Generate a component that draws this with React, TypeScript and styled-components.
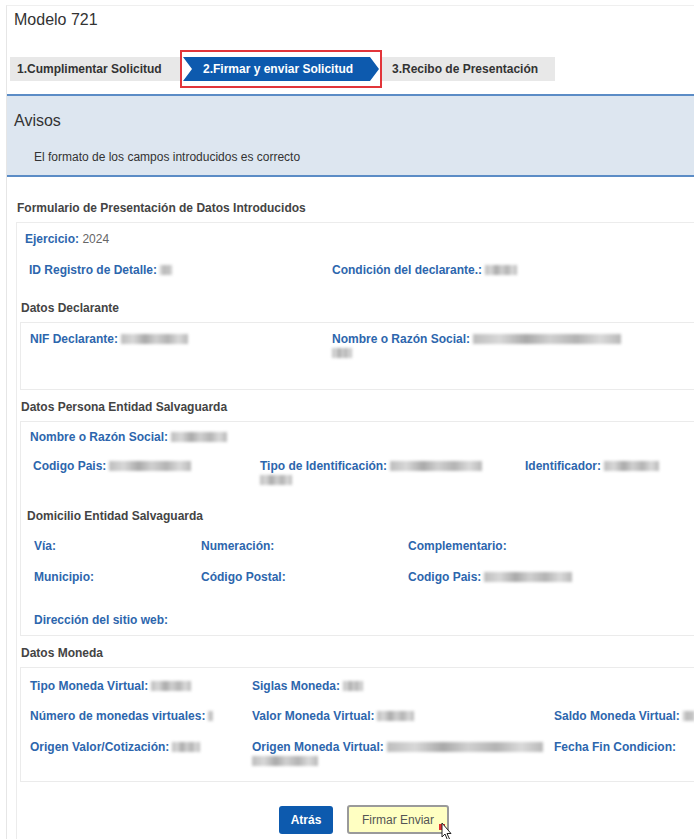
import React from "react";
import styled, { createGlobalStyle } from "styled-components";

const GlobalStyle = createGlobalStyle`
  html, body {
    margin: 0;
    padding: 0;
    background: #fff;
    overflow: hidden;
  }
  body {
    font-family: "Liberation Sans", Arial, sans-serif;
    color: #333;
  }
`;

const Page = styled.div`
  margin: 5px 0 0 6px;
  border-left: 1px solid #e6e6e6;
  border-top: 1px solid #efefef;
  min-height: 840px;
  overflow: hidden;
`;

const Title = styled.div`
  box-sizing: border-box;
  height: 51px;
  padding: 4px 0 0 7px;
  font-size: 16px;
  line-height: 20px;
  color: #333;
`;

const Steps = styled.div`
  display: flex;
  align-items: center;
  height: 24px;
  margin: 0 0 13px 3px;
`;

const Step = styled.div<{ $w: number; $pad: number }>`
  box-sizing: border-box;
  width: ${(p) => p.$w}px;
  height: 24px;
  padding-left: ${(p) => p.$pad}px;
  background: #e8e8e8;
  font-size: 12px;
  font-weight: bold;
  line-height: 24px;
  color: #333;
  white-space: nowrap;
`;

const ActiveFrame = styled.div`
  flex-shrink: 0;
  margin: -7px 0;
  padding: 5px 1px;
  border: 2px solid #e2353a;
  background: #fff;
`;

const ActiveStep = styled.div`
  box-sizing: border-box;
  width: 196px;
  height: 24px;
  padding-left: 20px;
  background: #0d5aae;
  color: #fff;
  font-size: 12px;
  font-weight: bold;
  line-height: 24px;
  white-space: nowrap;
  clip-path: polygon(0 0, calc(100% - 9px) 0, 100% 50%, calc(100% - 9px) 100%, 0 100%, 9px 50%);
`;

const Avisos = styled.div`
  background: #dde6f0;
  border-top: 2px solid #5b8cc6;
  border-bottom: 2px solid #5b8cc6;
  padding: 15px 0 11px 7px;
`;

const AvisosTitle = styled.div`
  font-size: 16px;
  line-height: 20px;
  color: #333;
`;

const AvisosMsg = styled.div`
  margin-top: 19px;
  padding-left: 20px;
  font-size: 12px;
  line-height: 14px;
  color: #333;
`;

const Heading = styled.div<{ $top: number; $indent: number }>`
  margin-top: ${(p) => p.$top}px;
  padding-left: ${(p) => p.$indent}px;
  font-size: 12px;
  font-weight: bold;
  line-height: 14px;
  color: #444;
  white-space: nowrap;
`;

const FormBox = styled.div`
  margin: 7px 0 0 9px;
  border: 1px solid #ececec;
  border-right: none;
  border-bottom: none;
  padding-bottom: 20px;
`;

const SubBox = styled.div<{ $h: number }>`
  box-sizing: border-box;
  height: ${(p) => p.$h}px;
  margin: 7px 0 0 3px;
  border: 1px solid #ebebeb;
  border-right: none;
`;

const Row = styled.div<{ $cols: string; $indent: number; $top: number }>`
  display: grid;
  grid-template-columns: ${(p) => p.$cols};
  padding-left: ${(p) => p.$indent}px;
  margin-top: ${(p) => p.$top}px;
  font-size: 12px;
  line-height: 14px;
`;

const Cell = styled.div<{ $shift?: number }>`
  padding-left: ${(p) => p.$shift || 0}px;
  white-space: nowrap;
`;

const Label = styled.span`
  font-weight: bold;
  color: #2d66ad;
`;

const Value = styled.span`
  color: #666;
`;

const Redacted = styled.span<{ $w: number; $block?: boolean }>`
  display: ${(p) => (p.$block ? "block" : "inline-block")};
  width: ${(p) => p.$w}px;
  height: 10px;
  margin: ${(p) => (p.$block ? "2px 0 0 0" : "0 0 0 3px")};
  vertical-align: -1px;
  background: linear-gradient(90deg, #bdbdbd 0%, #d8d8d8 18%, #a9a9a9 36%, #d0d0d0 52%, #b3b3b3 70%, #dadada 86%, #b8b8b8 100%);
  filter: blur(1.4px);
`;

const Buttons = styled.div`
  display: flex;
  align-items: center;
  gap: 14px;
  margin-top: 23px;
  padding-left: 262px;
`;

const BlueButton = styled.button`
  box-sizing: border-box;
  width: 54px;
  height: 28px;
  border: none;
  border-radius: 3px;
  background: #0d5aae;
  color: #fff;
  font-family: "Liberation Sans", Arial, sans-serif;
  font-size: 12px;
  font-weight: bold;
`;

const YellowButton = styled.button`
  position: relative;
  box-sizing: border-box;
  width: 102px;
  height: 29px;
  border: 2px solid #9a9a9a;
  border-radius: 3px;
  background: #ffffc2;
  color: #555;
  font-family: "Liberation Sans", Arial, sans-serif;
  font-size: 12px;
`;

const Cursor = styled.svg`
  position: absolute;
  right: -6px;
  bottom: -10px;
`;

type FieldProps = { label: string; widths?: number[]; text?: string; shift?: number };

function Field({ label, widths = [], text, shift }: FieldProps) {
  return (
    <Cell $shift={shift}>
      <Label>{label}</Label>
      {text && <Value> {text}</Value>}
      {widths.map((w, i) => (
        <Redacted key={i} $w={w} $block={i > 0} />
      ))}
    </Cell>
  );
}

export default function App() {
  return (
    <>
      <GlobalStyle />
      <Page>
        <Title>Modelo 721</Title>
        <Steps>
          <Step $w={170} $pad={7}>1.Cumplimentar Solicitud</Step>
          <ActiveFrame>
            <ActiveStep>2.Firmar y enviar Solicitud</ActiveStep>
          </ActiveFrame>
          <Step $w={173} $pad={10}>3.Recibo de Presentación</Step>
        </Steps>

        <Avisos>
          <AvisosTitle>Avisos</AvisosTitle>
          <AvisosMsg>El formato de los campos introducidos es correcto</AvisosMsg>
        </Avisos>

        <Heading $top={24} $indent={10}>Formulario de Presentación de Datos Introducidos</Heading>
        <FormBox>
          <Row $cols="1fr" $indent={8} $top={9}>
            <Field label="Ejercicio:" text="2024" />
          </Row>
          <Row $cols="303px 1fr" $indent={12} $top={17}>
            <Field label="ID Registro de Detalle:" widths={[12]} />
            <Field label="Condición del declarante.:" widths={[32]} />
          </Row>

          <Heading $top={24} $indent={4}>Datos Declarante</Heading>
          <SubBox $h={68}>
            <Row $cols="302px 1fr" $indent={9} $top={9}>
              <Field label="NIF Declarante:" widths={[67]} />
              <Field label="Nombre o Razón Social:" widths={[148, 20]} />
            </Row>
          </SubBox>

          <Heading $top={10} $indent={4}>Datos Persona Entidad Salvaguarda</Heading>
          <SubBox $h={215}>
            <Row $cols="1fr" $indent={9} $top={8}>
              <Field label="Nombre o Razón Social:" widths={[56]} />
            </Row>
            <Row $cols="227px 265px 1fr" $indent={12} $top={15}>
              <Field label="Codigo Pais:" widths={[82]} />
              <Field label="Tipo de Identificación:" widths={[92, 32]} />
              <Field label="Identificador:" widths={[55]} />
            </Row>
            <Heading $top={24} $indent={6}>Domicilio Entidad Salvaguarda</Heading>
            <Row $cols="167px 207px 1fr" $indent={13} $top={16}>
              <Field label="Vía:" />
              <Field label="Numeración:" />
              <Field label="Complementario:" />
            </Row>
            <Row $cols="167px 207px 1fr" $indent={13} $top={17}>
              <Field label="Municipio:" />
              <Field label="Código Postal:" />
              <Field label="Codigo Pais:" widths={[88]} />
            </Row>
            <Row $cols="1fr" $indent={13} $top={29}>
              <Field label="Dirección del sitio web:" />
            </Row>
          </SubBox>

          <Heading $top={10} $indent={4}>Datos Moneda</Heading>
          <SubBox $h={115}>
            <Row $cols="222px 302px 1fr" $indent={9} $top={11}>
              <Field label="Tipo Moneda Virtual:" widths={[40]} />
              <Field label="Siglas Moneda:" widths={[20]} />
              <Cell />
            </Row>
            <Row $cols="222px 302px 1fr" $indent={9} $top={16}>
              <Field label="Número de monedas virtuales:" widths={[5]} />
              <Field label="Valor Moneda Virtual:" widths={[37]} />
              <Field label="Saldo Moneda Virtual:" widths={[12]} />
            </Row>
            <Row $cols="222px 302px 1fr" $indent={9} $top={17}>
              <Field label="Origen Valor/Cotización:" widths={[28]} />
              <Field label="Origen Moneda Virtual:" widths={[156, 66]} />
              <Field label="Fecha Fin Condicion:" />
            </Row>
          </SubBox>

          <Buttons>
            <BlueButton>Atrás</BlueButton>
            <YellowButton>
              Firmar Enviar
              <Cursor width="14" height="20" viewBox="0 0 14 20">
                <rect x="0" y="2" width="6" height="6" fill="#e0302e" />
                <path
                  d="M3 1 L3 15 L6 12 L8.5 18 L10.5 17 L8 11.5 L12 11.5 Z"
                  fill="#fff"
                  stroke="#222"
                  strokeWidth="1"
                  strokeLinejoin="round"
                />
              </Cursor>
            </YellowButton>
          </Buttons>
        </FormBox>
      </Page>
    </>
  );
}
